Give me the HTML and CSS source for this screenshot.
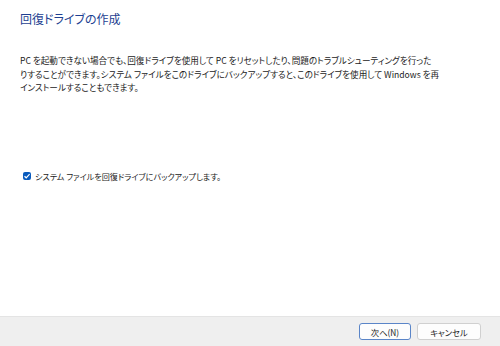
FILE: index.html
```html
<!DOCTYPE html>
<html lang="ja">
<head>
  <meta charset="UTF-8" />
  <meta name="viewport" content="width=device-width, initial-scale=1.0"/>
  <title>回復ドライブの作成</title>
  <link rel="stylesheet" href="styles.css">
</head>
<body>
  <div class="dialog">
    <div class="content">
      <h1 class="title">回復ドライブの作成</h1>
      <p class="desc">PC を起動できない場合でも、回復ドライブを使用して PC をリセットしたり、問題のトラブルシューティングを行った<br>りすることができます。システム ファイルをこのドライブにバックアップすると、このドライブを使用して Windows を再<br>インストールすることもできます。</p>
      <label class="check">
        <span class="box">
          <svg width="8" height="8" viewBox="0 0 8 8"><path d="M1.5 4.2 L3.2 5.8 L6.6 2.2" fill="none" stroke="#fff" stroke-width="1.2"/></svg>
        </span>
        システム ファイルを回復ドライブにバックアップします。
      </label>
    </div>
    <div class="footer">
      <button class="btn default">次へ(N)</button>
      <button class="btn">キャンセル</button>
    </div>
  </div>
</body>
</html>
```

FILE: styles.css
```css
body {
  margin: 0;
  padding: 0;
  background: #fff;
  font-family: "Noto Sans CJK JP", "Noto Sans", sans-serif;
  font-feature-settings: "palt";
  color: #1b1b1b;
}

.dialog {
  display: flex;
  flex-direction: column;
  height: 346px;
}

.content {
  flex: 1;
  padding: 10px 20px 0 20px;
}

.title {
  margin: 0;
  font-size: 12px;
  font-weight: normal;
  color: #1e3f91;
  line-height: 18px;
}

.desc {
  margin: 26px 0 0 0;
  font-size: 8.6px;
  line-height: 13.5px;
}

.check {
  display: flex;
  align-items: center;
  gap: 4px;
  margin: 76px 0 0 3px;
  font-size: 8.1px;
}

.box {
  display: flex;
  align-items: center;
  justify-content: center;
  width: 8px;
  height: 8px;
  border-radius: 2px;
  background: #0a5bbd;
}

.footer {
  height: 29px;
  background: #efefef;
  border-top: 1px solid #e4e4e4;
  display: flex;
  justify-content: flex-end;
  align-items: center;
  gap: 6px;
  padding-right: 19px;
}

.btn {
  font-family: inherit;
  font-feature-settings: "palt";
  font-size: 8.3px;
  height: 17px;
  width: 52px;
  padding: 0;
  background: #fdfdfd;
  border: 1px solid #d0d0d0;
  border-radius: 3px;
  color: #1b1b1b;
}

.btn.default {
  border-color: #5a85c8;
}

.btn:last-child {
  width: 64px;
}
```
